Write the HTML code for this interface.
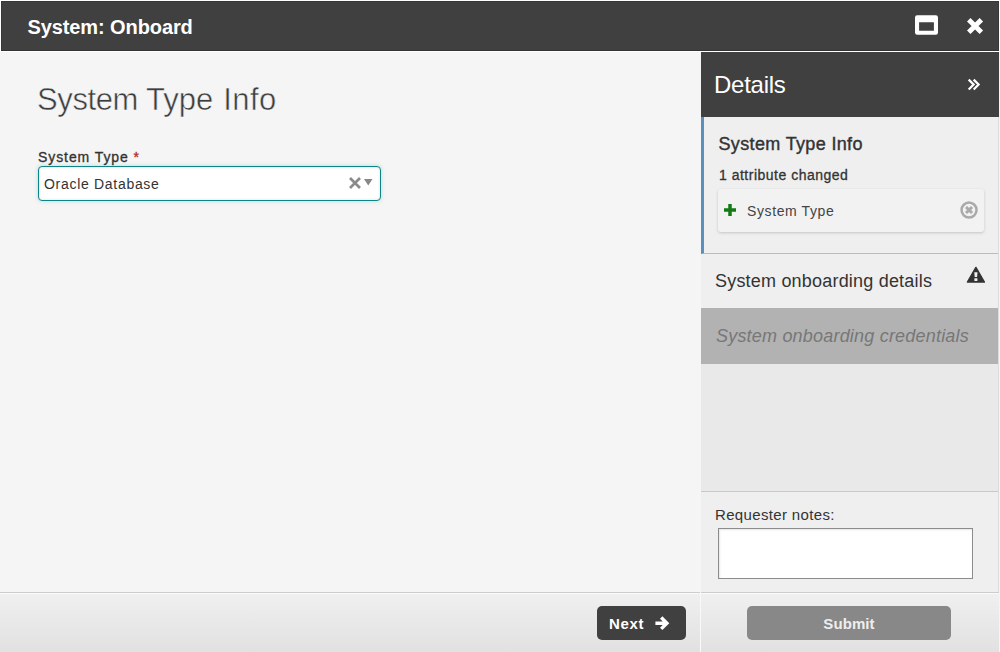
<!DOCTYPE html>
<html lang="en">
<head>
<meta charset="utf-8">
<title>System: Onboard</title>
<style>
*{box-sizing:border-box;margin:0;padding:0}
html,body{width:1000px;height:652px;overflow:hidden;background:#f5f5f5}
body{font-family:"Liberation Sans",sans-serif;color:#333;position:relative}
.abs{position:absolute}
.t{position:absolute;white-space:nowrap;line-height:1}
#win{left:1px;top:1px;width:998px;height:651px;background:#f5f5f5}
#frame{left:-1px;top:-1px;width:1000px;height:52px;background:#fff}
#titlebar{left:0;top:0;width:998px;height:50px;background:#404040;border:1px solid #373737;border-bottom-color:#333}
#title{left:25.500px;top:15px;font-size:20px;font-weight:bold;color:#fff;letter-spacing:-.1px}
#sep{left:0;top:50px;width:998px;height:1px;background:#fff}
#main{left:0;top:51px;width:699px;height:541px;background:#f5f5f5}
#h1{left:36px;top:31.800px;font-size:31px;color:#3e3e3e;letter-spacing:0;-webkit-text-stroke:.5px #f5f5f5}
#lbl{left:37px;top:98px;font-size:14px;color:#333;letter-spacing:.92px;-webkit-text-stroke:.32px #333}
#req{color:#b5272d;-webkit-text-stroke:.3px #b5272d}
#sel{left:37px;top:114px;width:343px;height:35px;background:#fff;border:1px solid #0b8585;border-radius:4px;box-shadow:0 0 4px rgba(11,133,133,.25), inset 0 0 3px rgba(0,0,0,.14)}
#selv{left:5px;top:10px;font-size:14px;color:#333;letter-spacing:.7px}
#panel{left:700px;top:51px;width:297px;height:541px;background:#eee}
#pright{left:997px;top:116px;width:1px;height:475px;background:#dcdcdc}
#pleft{display:none}
#dhead{left:0;top:0;width:298px;height:65px;background:#404040}
#dtitle{left:13px;top:21px;font-size:24px;color:#fff;letter-spacing:-.25px}
#s1{left:0;top:65px;width:297px;height:137px;background:#efefef;border-left:3px solid #5a8fbe;border-bottom:1px solid #bcbcbc}
#s1t{left:14.500px;top:17.600px;font-size:18px;color:#333;letter-spacing:.35px;-webkit-text-stroke:.4px #333}
#s1c{left:15px;top:51.200px;font-size:14px;color:#333;letter-spacing:.5px;-webkit-text-stroke:.3px #333}
#card{left:14px;top:72px;width:266px;height:43px;background:#f2f2f2;border-radius:3px;box-shadow:0 1px 3px rgba(0,0,0,.18)}
#cardt{left:29px;top:15px;font-size:14px;color:#444;letter-spacing:.6px}
#s2{left:0;top:202px;width:297px;height:55px;background:#efefef}
#s2t{left:14px;top:18px;font-size:18px;color:#333;letter-spacing:.2px}
#s3{left:0;top:256px;width:297px;height:56px;background:#b2b2b2}
#s3t{left:15px;top:19px;font-size:18px;font-style:italic;color:#777;letter-spacing:.2px}
#gap{left:0;top:312px;width:297px;height:128px;background:#e9e9e9}
#notes{left:0;top:439px;width:297px;height:102px;background:#efefef;border-top:1px solid #c8c8c8}
#notesl{left:14px;top:15px;font-size:15px;color:#333;letter-spacing:.35px}
#ta{left:17px;top:36px;width:255px;height:51px;background:#fff;border:1px solid #8c8c8c;box-shadow:inset 1px 1px 2px rgba(0,0,0,.1)}
#foot{left:-1px;top:591px;width:999px;height:60px;background:linear-gradient(#f0f0f0,#e1e1e1);border-top:1px solid #ccc;box-shadow:inset 0 1px 0 #fafafa}
#fdiv{left:699px;top:591px;width:1px;height:60px;background:#f9f9f9}
#next{left:597px;top:13px;width:89px;height:34px;background:#404040;border-radius:5px}
#nextt{left:12px;top:10px;font-size:15px;font-weight:bold;color:#fff;letter-spacing:.7px}
#submit{left:747px;top:13px;width:204px;height:34px;background:#888;border-radius:5px}
#submitt{left:0;width:204px;text-align:center;top:10px;font-size:15px;font-weight:bold;color:#eee;letter-spacing:.1px}
svg{position:absolute;overflow:visible}
</style>
</head>
<body>
<div id="win" class="abs">
  <div id="frame" class="abs"></div>
  <div id="titlebar" class="abs">
    <div id="title" class="t">System: Onboard</div>
    <svg id="icowin" style="left:913px;top:13px" width="23" height="20" viewBox="0 0 23 20"><path fill="#fff" fill-rule="evenodd" d="M2.200 .3h18.600A2.200 2.200 0 0 1 23 2.500v15.100a2.200 2.200 0 0 1-2.200 2.200H2.200A2.200 2.200 0 0 1 0 17.600V2.500A2.200 2.200 0 0 1 2.200 .3zM4.100 7.200v8.500h14.800V7.200z"/></svg>
    <svg id="icox" style="left:964.900px;top:15.800px" width="16.100" height="16.100" viewBox="0 0 16.100 16.100"><path fill="none" stroke="#fff" stroke-width="4.900" stroke-linejoin="round" d="M1.750 1.750l12.600 12.600M14.350 1.750L1.750 14.350"/></svg>
  </div>
  <div id="sep" class="abs"></div>
  <div id="main" class="abs">
    <div id="h1" class="t"><span style="letter-spacing:-.4px">System</span> Type <span style="letter-spacing:.4px;margin-left:1.500px">Info</span></div>
    <div id="lbl" class="t">System Type <span id="req">*</span></div>
    <div id="sel" class="abs">
      <div id="selv" class="t">Oracle Database</div>
      <svg style="left:310px;top:10px" width="12" height="12" viewBox="0 0 12 12"><path fill="none" stroke="#8a8a8a" stroke-width="2.700" d="M1 1l10 10M11 1L1 11"/></svg>
      <svg style="left:325.200px;top:12.400px" width="9" height="7" viewBox="0 0 9 7"><path fill="#888" d="M0 0h8.500L4.250 6.400z"/></svg>
    </div>
  </div>
  <div id="pleft" class="abs"></div>
  <div id="panel" class="abs">
    <div id="dhead" class="abs">
      <div id="dtitle" class="t">Details</div>
      <svg style="left:266px;top:26px" width="14" height="14" viewBox="0 0 14 14"><path fill="none" stroke="#fff" stroke-width="2.200" d="M1.700 1.650L6.600 6.550L1.700 11.450M6.700 1.650L11.600 6.550L6.700 11.450"/></svg>
    </div>
    <div id="s1" class="abs">
      <div id="s1t" class="t">System Type Info</div>
      <div id="s1c" class="t">1 attribute changed</div>
      <div id="card" class="abs">
        <svg style="left:6.400px;top:15.200px" width="12" height="12" viewBox="0 0 12 12"><path fill="none" stroke="#157a15" stroke-width="3.500" d="M6 0v12M0 6h12"/></svg>
        <div id="cardt" class="t">System Type</div>
        <svg style="left:242px;top:11.600px" width="18" height="18" viewBox="0 0 18 18"><circle cx="9.050" cy="9.050" r="7.500" fill="none" stroke="#aaa" stroke-width="2.500"/><path fill="none" stroke="#aaa" stroke-width="3" d="M6.050 6.050l6 6M12.050 6.050l-6 6"/></svg>
      </div>
    </div>
    <div id="s2" class="abs">
      <div id="s2t" class="t">System onboarding details</div>
      <svg style="left:264.600px;top:12px" width="20" height="18" viewBox="0 0 20 18"><path fill="#333" stroke="#333" stroke-width="1.400" stroke-linejoin="round" d="M9.900 1.400L18.400 16.100H1.400z"/><path fill="#f0f0f0" d="M8.300 6.200h3.200l-.4 4.900H8.700zM8.400 12.300h3v2.700h-3z"/></svg>
    </div>
    <div id="s3" class="abs">
      <div id="s3t" class="t">System onboarding credentials</div>
    </div>
    <div id="gap" class="abs"></div>
    <div id="notes" class="abs">
      <div id="notesl" class="t">Requester notes:</div>
      <div id="ta" class="abs"></div>
    </div>
  </div>
  <div id="foot" class="abs">
    <div id="next" class="abs">
      <div id="nextt" class="t">Next</div>
      <svg style="left:58px;top:10px" width="15" height="15" viewBox="0 0 15 15"><path fill="none" stroke="#fff" stroke-width="3.400" d="M.4 7.200h11M6.200 1.500L11.900 7.200L6.200 12.900"/></svg>
    </div>
    <div id="submit" class="abs">
      <div id="submitt" class="t">Submit</div>
    </div>
  </div>
  <div id="fdiv" class="abs"></div>
  <div id="pright" class="abs"></div>
</div>
</body>
</html>
